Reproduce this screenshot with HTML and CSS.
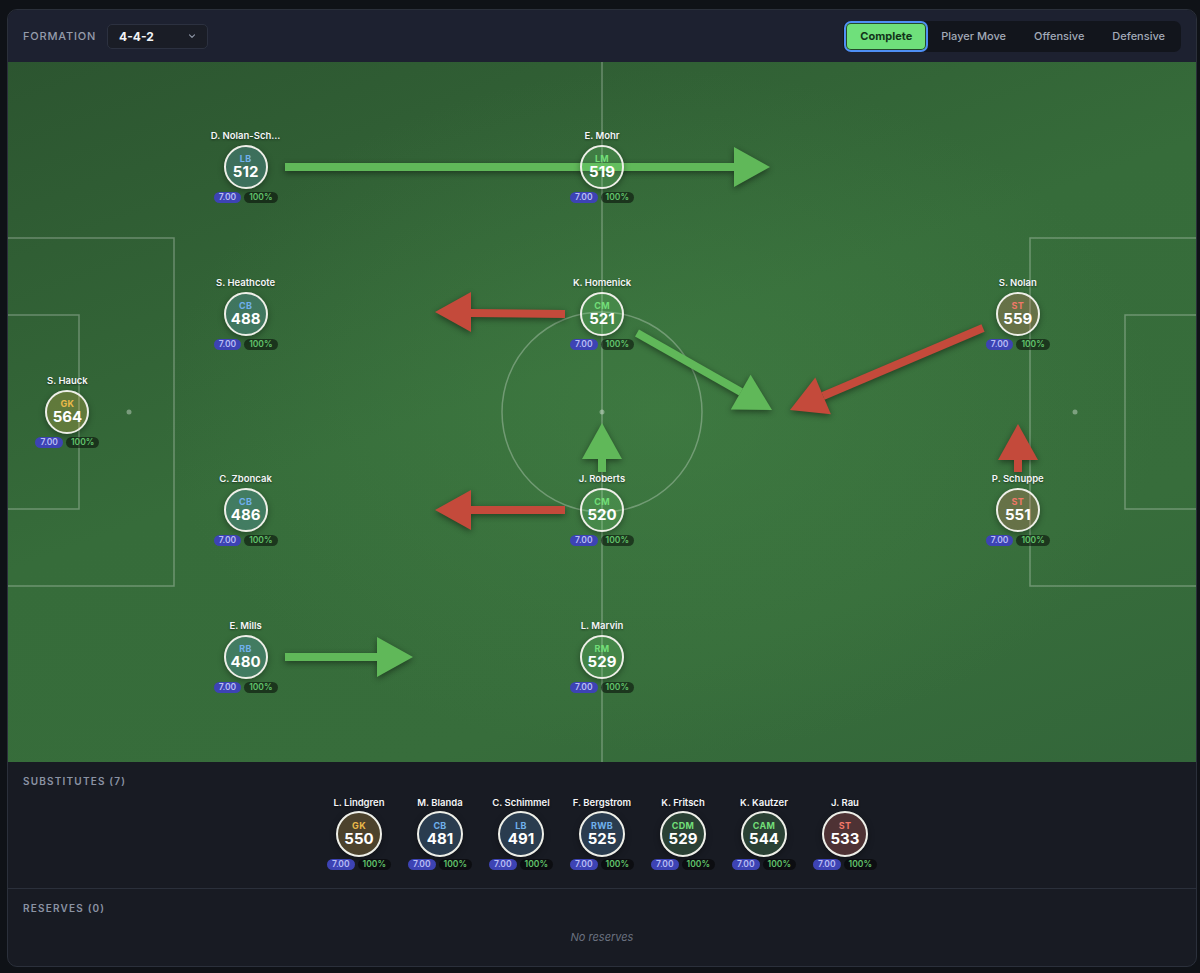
FILE: index.html
```html
<!DOCTYPE html>
<html lang="en">
  <head>
    <meta charset="UTF-8" />
    <meta name="viewport" content="width=device-width, initial-scale=1.0" />
    <title>Lineup - Formation</title>
    <link rel="stylesheet" href="styles.css">
  </head>
  <body>
    <div class="card">
      <header class="bar">
        <div class="formation">
          <span class="bar-label">Formation</span>
          <button class="select">
            <span>4-4-2</span>
            <svg width="10" height="10" viewBox="0 0 10 10"><path d="M2.5 3.8 5 6.3l2.5-2.5" fill="none" stroke="#8b93a3" stroke-width="1.2" stroke-linecap="round" stroke-linejoin="round"/></svg>
          </button>
        </div>
        <nav class="tabs">
          <button class="tab active">Complete</button>
          <button class="tab">Player Move</button>
          <button class="tab">Offensive</button>
          <button class="tab">Defensive</button>
        </nav>
      </header>

      <section class="pitch">
        <!-- pitch markings -->
        <svg class="lines" viewBox="0 0 1188 700">
          <line x1="594" y1="0" x2="594" y2="700" />
          <circle cx="594" cy="350" r="100" />
          <circle class="spot" cx="594" cy="350" r="2.5" />
          <rect x="-2" y="176" width="168" height="348" />
          <rect x="-2" y="253" width="73" height="194" />
          <circle class="spot" cx="121" cy="350" r="2.5" />
          <rect x="1022" y="176" width="170" height="348" />
          <rect x="1117" y="253" width="75" height="194" />
          <circle class="spot" cx="1067" cy="350" r="2.5" />
        </svg>

        <!-- movement arrows -->
        <svg class="arrows" viewBox="0 0 1188 700">
          <g class="arrow green">
            <line x1="277" y1="105" x2="727" y2="105" />
            <polygon points="762,105 726,85 726,125" />
          </g>
          <g class="arrow red">
            <line x1="557" y1="252" x2="462" y2="251" />
            <polygon points="427,250 463,230 463,270" />
          </g>
          <g class="arrow green">
            <line x1="629" y1="271" x2="733" y2="330" />
            <polygon points="764,348 722.8,347.6 742.6,312.8" />
          </g>
          <g class="arrow red">
            <line x1="975" y1="266" x2="815" y2="334" />
            <polygon points="782,348 807.3,315.5 822.9,352.3" />
          </g>
          <g class="arrow green">
            <line x1="594" y1="410" x2="594" y2="396" />
            <polygon points="594,361 574,397 614,397" />
          </g>
          <g class="arrow red">
            <line x1="557" y1="448" x2="462" y2="448" />
            <polygon points="427,448 463,428 463,468" />
          </g>
          <g class="arrow red">
            <line x1="1010" y1="410" x2="1010" y2="397" />
            <polygon points="1010,362 990,398 1030,398" />
          </g>
          <g class="arrow green">
            <line x1="277" y1="595" x2="370" y2="595" />
            <polygon points="405,595 369,575 369,615" />
          </g>
        </svg>

        <div class="player gk" style="left: 5%; top: 50%">
          <span class="name">S. Hauck</span>
          <div class="disc"><span class="pos">GK</span><span class="ovr">564</span></div>
          <div class="badges"><span class="rating">7.00</span><span class="fit">100%</span></div>
        </div>

        <div class="player def" style="left: 20%; top: 15%">
          <span class="name">D. Nolan-Sch...</span>
          <div class="disc"><span class="pos">LB</span><span class="ovr">512</span></div>
          <div class="badges"><span class="rating">7.00</span><span class="fit">100%</span></div>
        </div>
        <div class="player def" style="left: 20%; top: 36%">
          <span class="name">S. Heathcote</span>
          <div class="disc"><span class="pos">CB</span><span class="ovr">488</span></div>
          <div class="badges"><span class="rating">7.00</span><span class="fit">100%</span></div>
        </div>
        <div class="player def" style="left: 20%; top: 64%">
          <span class="name">C. Zboncak</span>
          <div class="disc"><span class="pos">CB</span><span class="ovr">486</span></div>
          <div class="badges"><span class="rating">7.00</span><span class="fit">100%</span></div>
        </div>
        <div class="player def" style="left: 20%; top: 85%">
          <span class="name">E. Mills</span>
          <div class="disc"><span class="pos">RB</span><span class="ovr">480</span></div>
          <div class="badges"><span class="rating">7.00</span><span class="fit">100%</span></div>
        </div>

        <div class="player mid" style="left: 50%; top: 15%">
          <span class="name">E. Mohr</span>
          <div class="disc"><span class="pos">LM</span><span class="ovr">519</span></div>
          <div class="badges"><span class="rating">7.00</span><span class="fit">100%</span></div>
        </div>
        <div class="player mid" style="left: 50%; top: 36%">
          <span class="name">K. Homenick</span>
          <div class="disc"><span class="pos">CM</span><span class="ovr">521</span></div>
          <div class="badges"><span class="rating">7.00</span><span class="fit">100%</span></div>
        </div>
        <div class="player mid" style="left: 50%; top: 64%">
          <span class="name">J. Roberts</span>
          <div class="disc"><span class="pos">CM</span><span class="ovr">520</span></div>
          <div class="badges"><span class="rating">7.00</span><span class="fit">100%</span></div>
        </div>
        <div class="player mid" style="left: 50%; top: 85%">
          <span class="name">L. Marvin</span>
          <div class="disc"><span class="pos">RM</span><span class="ovr">529</span></div>
          <div class="badges"><span class="rating">7.00</span><span class="fit">100%</span></div>
        </div>

        <div class="player att" style="left: 85%; top: 36%">
          <span class="name">S. Nolan</span>
          <div class="disc"><span class="pos">ST</span><span class="ovr">559</span></div>
          <div class="badges"><span class="rating">7.00</span><span class="fit">100%</span></div>
        </div>
        <div class="player att" style="left: 85%; top: 64%">
          <span class="name">P. Schuppe</span>
          <div class="disc"><span class="pos">ST</span><span class="ovr">551</span></div>
          <div class="badges"><span class="rating">7.00</span><span class="fit">100%</span></div>
        </div>
      </section>

      <section class="bench">
        <h3 class="bench-title">Substitutes (7)</h3>
        <div class="bench-row">
          <div class="sub gk">
            <span class="name">L. Lindgren</span>
            <div class="disc"><span class="pos">GK</span><span class="ovr">550</span></div>
            <div class="badges"><span class="rating">7.00</span><span class="fit">100%</span></div>
          </div>
          <div class="sub def">
            <span class="name">M. Blanda</span>
            <div class="disc"><span class="pos">CB</span><span class="ovr">481</span></div>
            <div class="badges"><span class="rating">7.00</span><span class="fit">100%</span></div>
          </div>
          <div class="sub def">
            <span class="name">C. Schimmel</span>
            <div class="disc"><span class="pos">LB</span><span class="ovr">491</span></div>
            <div class="badges"><span class="rating">7.00</span><span class="fit">100%</span></div>
          </div>
          <div class="sub def">
            <span class="name">F. Bergstrom</span>
            <div class="disc"><span class="pos">RWB</span><span class="ovr">525</span></div>
            <div class="badges"><span class="rating">7.00</span><span class="fit">100%</span></div>
          </div>
          <div class="sub mid">
            <span class="name">K. Fritsch</span>
            <div class="disc"><span class="pos">CDM</span><span class="ovr">529</span></div>
            <div class="badges"><span class="rating">7.00</span><span class="fit">100%</span></div>
          </div>
          <div class="sub mid">
            <span class="name">K. Kautzer</span>
            <div class="disc"><span class="pos">CAM</span><span class="ovr">544</span></div>
            <div class="badges"><span class="rating">7.00</span><span class="fit">100%</span></div>
          </div>
          <div class="sub att">
            <span class="name">J. Rau</span>
            <div class="disc"><span class="pos">ST</span><span class="ovr">533</span></div>
            <div class="badges"><span class="rating">7.00</span><span class="fit">100%</span></div>
          </div>
        </div>
      </section>

      <section class="bench reserves">
        <h3 class="bench-title">Reserves (0)</h3>
        <p class="empty">No reserves</p>
      </section>
    </div>
  </body>
</html>
```

FILE: styles.css
```css
/* Variables */
:root {
  --page-bg: #0f1217;
  --card-bg: #181b23;
  --bar-bg: #1d2130;
  --border: #2b303b;
  --muted: #8b93a3;
  --gk: #e9b949;
  --def: #6fb0ec;
  --mid: #72de78;
  --att: #f07868;
  --font-family: "Inter", "Liberation Sans", sans-serif;
}

body {
  margin: 9px 3px 0 7px;
  background-color: var(--page-bg);
  font-family: var(--font-family);
  color: #fff;
}

.card {
  background-color: var(--card-bg);
  border: 1px solid var(--border);
  border-radius: 10px;
  overflow: hidden;
}

/* Header */
.bar {
  display: flex;
  justify-content: space-between;
  align-items: center;
  height: 52px;
  padding: 0 15px;
  background-color: var(--bar-bg);
}

.formation {
  display: flex;
  align-items: center;
  gap: 11px;
}

.bar-label {
  font-size: 11px;
  font-weight: 500;
  letter-spacing: 0.8px;
  text-transform: uppercase;
  color: #959cab;
}

.select {
  display: flex;
  justify-content: space-between;
  align-items: center;
  width: 101px;
  height: 25px;
  padding: 0 10px 0 11px;
  background-color: #1a1d26;
  border: 1px solid #2c3140;
  border-radius: 5px;
  color: #f2f4f7;
  font-family: inherit;
  font-size: 12px;
  font-weight: 700;
}

.tabs {
  display: flex;
  gap: 2px;
  padding: 2px 3px;
  background-color: #12151c;
  border-radius: 7px;
}

.tab {
  height: 27px;
  padding: 0 13px;
  background: none;
  border: none;
  border-radius: 5px;
  color: #a3aab8;
  font-family: inherit;
  font-size: 11px;
  font-weight: 500;
}

.tab.active {
  padding: 0 14px;
  background-color: #6fe07b;
  color: #12331a;
  font-weight: 700;
  box-shadow: inset 0 0 0 1px #234a2a, 0 0 0 2px #4f8ff5;
}

/* Pitch */
.pitch {
  position: relative;
  height: 700px;
  background:
    radial-gradient(ellipse 60% 70% at 55% 50%, rgba(70, 135, 72, 0.45), rgba(70, 135, 72, 0) 70%),
    linear-gradient(160deg, #2c5530 0%, #366c3a 45%, #376d3b 75%, #33663a 100%);
  overflow: hidden;
}

.lines,
.arrows {
  position: absolute;
  inset: 0;
  width: 100%;
  height: 100%;
}

.lines line,
.lines circle,
.lines rect {
  fill: none;
  stroke: rgba(255, 255, 255, 0.28);
  stroke-width: 1.5;
}

.lines .spot {
  fill: rgba(255, 255, 255, 0.35);
  stroke: none;
}

.arrow {
  filter: drop-shadow(0 2px 3px rgba(0, 0, 0, 0.45));
}

.arrow line {
  stroke-width: 8;
}

.arrow.green line { stroke: #60b859; }
.arrow.green polygon { fill: #60b859; }
.arrow.red line { stroke: #c44a3b; }
.arrow.red polygon { fill: #c44a3b; }

/* Player nodes */
.player,
.sub {
  display: flex;
  flex-direction: column;
  align-items: center;
}

.player {
  position: absolute;
  width: 96px;
  transform: translate(-50%, -50%);
}

.name {
  font-size: 9.5px;
  line-height: 10px;
  font-weight: 600;
  white-space: nowrap;
  color: #f4f5f7;
  text-shadow: 0 1px 2px rgba(0, 0, 0, 0.5);
}

.disc {
  display: flex;
  flex-direction: column;
  align-items: center;
  justify-content: center;
  box-sizing: border-box;
  width: 44px;
  height: 44px;
  margin: 4px 0 3px;
  border: 2px solid #eeefe8;
  border-radius: 50%;
  box-shadow: 0 2px 6px rgba(0, 0, 0, 0.35);
}

.sub .disc {
  width: 46px;
  height: 46px;
  margin: 3px 0 2px;
}

.pos {
  font-size: 9px;
  line-height: 10px;
  font-weight: 700;
  letter-spacing: 0.3px;
}

.ovr {
  font-size: 15px;
  line-height: 16px;
  font-weight: 700;
  color: #fff;
}

.gk .disc { background-color: rgba(233, 185, 73, 0.25); }
.def .disc { background-color: rgba(111, 176, 236, 0.22); }
.mid .disc { background-color: rgba(114, 222, 120, 0.2); }
.att .disc { background-color: rgba(240, 120, 104, 0.25); }

.gk .pos { color: var(--gk); }
.def .pos { color: var(--def); }
.mid .pos { color: var(--mid); }
.att .pos { color: var(--att); }

.badges {
  display: flex;
  gap: 3px;
}

.rating,
.fit {
  height: 11px;
  padding: 0 5px;
  border-radius: 6px;
  font-size: 8.5px;
  line-height: 11px;
  font-weight: 600;
}

.rating {
  background-color: #3d43b4;
  color: #b9bef6;
}

.fit {
  background-color: rgba(0, 0, 0, 0.5);
  color: #62c46c;
}

/* Bench */
.bench {
  padding: 13px 15px 18px;
  border-bottom: 1px solid var(--border);
}

.bench-title {
  margin: 0 0 11px;
  font-size: 10px;
  line-height: 12px;
  font-weight: 600;
  letter-spacing: 1.2px;
  text-transform: uppercase;
  color: var(--muted);
}

.bench-row {
  display: flex;
  justify-content: center;
  gap: 5px;
}

.sub {
  width: 76px;
}

.reserves {
  padding-bottom: 22px;
  border-bottom: none;
}

.reserves .bench-title {
  margin-bottom: 16px;
}

.empty {
  margin: 0;
  font-size: 11px;
  line-height: 14px;
  font-style: italic;
  text-align: center;
  color: #6b7280;
}
```
